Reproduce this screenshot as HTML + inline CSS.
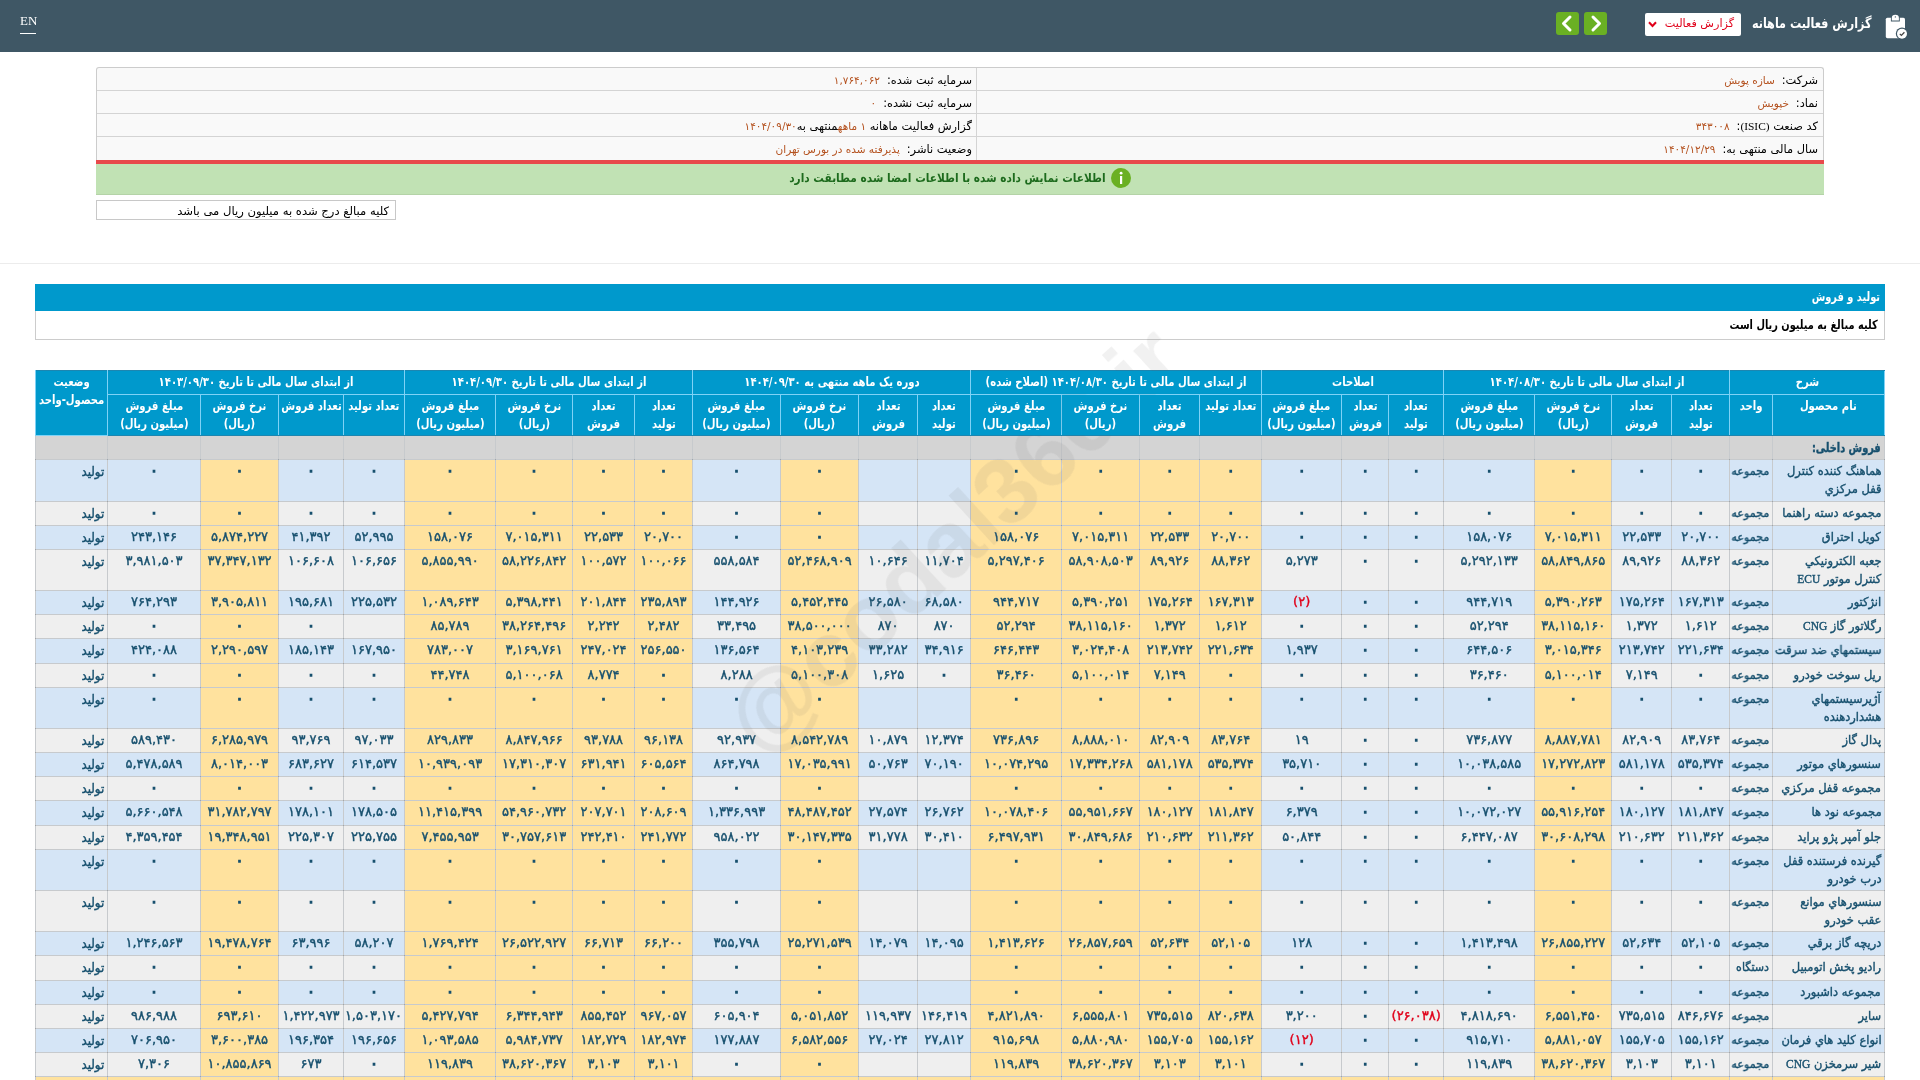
<!DOCTYPE html>
<html lang="fa">
<head>
<meta charset="utf-8">
<title>گزارش فعالیت ماهانه</title>
<style>
html,body{margin:0;padding:0;}
body{width:1920px;height:1080px;overflow:hidden;background:#fff;position:relative;
 font-family:"DejaVu Sans","Liberation Sans",sans-serif;font-size:11px;color:#000;}
.lt{font-family:"Liberation Serif","DejaVu Serif",serif;}
#root{position:absolute;left:0;top:0;width:1920px;height:1080px;overflow:hidden;will-change:transform;}
.abs{position:absolute;}
.sr{display:inline-block;transform:scaleX(.785);transform-origin:right center;}
.nr{display:inline-block;transform:scaleX(.94);transform-origin:right center;}
.sx{display:inline-block;transform:scaleX(.805);transform-origin:center center;margin:0 -20px;}
#topbar{left:0;top:0;width:1920px;height:52px;background:#3f5765;}
#en{left:20px;top:13px;color:#fff;font-family:"Liberation Serif",serif;font-size:13px;line-height:16px;}
#enline{left:20px;top:33px;width:16px;height:1px;background:#fff;}
#title{right:48px;top:12px;color:#fff;font-weight:bold;font-size:14px;line-height:22px;white-space:nowrap;direction:rtl;transform:scaleX(.8);transform-origin:right center;}
#sel{left:1645px;top:13px;width:96px;height:23px;background:#fff;border-radius:2px;direction:rtl;color:#e0001a;font-size:11.2px;line-height:22px;white-space:nowrap;}
#sel span{position:absolute;right:7px;top:0;}
.btn{top:12px;width:23px;height:23px;background:#6ab023;border-radius:3px;}
#info{left:96px;top:67px;width:1728px;height:94px;box-sizing:border-box;border:1px solid #ccc;border-bottom:none;border-radius:3px 3px 0 0;background:#f9f9f9;}
.irow{position:absolute;left:0;width:1726px;height:23px;border-bottom:1px solid #d4d4d4;box-sizing:border-box;}
.ic{position:absolute;top:0;height:22px;line-height:24px;direction:rtl;text-align:right;white-space:nowrap;font-size:11.4px;box-sizing:border-box;padding-right:5px;}
.ic.r{left:880px;width:846px;}
.ic.l{left:0;width:880px;border-right:0;}
.ic .v{color:#b4511e;font-size:10.5px;}
#vsep{left:879px;top:0;width:1px;height:93px;background:#d4d4d4;}
#red{left:96px;top:160px;width:1728px;height:4px;background:#e8494b;}
#green{left:96px;top:164px;width:1728px;height:31px;background:#c1e2b4;border-bottom:1px solid #b4d3a7;box-sizing:border-box;direction:rtl;text-align:center;color:#1d6b1d;font-size:12px;font-weight:bold;line-height:29px;white-space:nowrap;}
#green span{display:inline-block;transform:scaleX(.88);transform-origin:right center;margin-left:-43px;}
#note{left:96px;top:200px;width:300px;height:20px;box-sizing:border-box;border:1px solid #c8c8c8;direction:rtl;text-align:right;padding-right:6px;font-size:11.6px;line-height:21px;white-space:nowrap;}
#hr{left:0;top:263px;width:1920px;height:1px;background:#ececec;}
#bar{left:35px;top:284px;width:1850px;height:27px;background:#0099cc;color:#fff;font-weight:bold;font-size:12.5px;line-height:25px;direction:rtl;text-align:right;padding-right:5px;box-sizing:border-box;white-space:nowrap;}
#sub{left:35px;top:311px;width:1850px;height:29px;box-sizing:border-box;border:1px solid #ccc;border-top:none;font-weight:bold;font-size:12.5px;line-height:27px;direction:rtl;text-align:right;padding-right:6px;white-space:nowrap;}
#wm{left:553px;top:469px;width:800px;height:140px;line-height:140px;text-align:center;font-family:"Liberation Sans",sans-serif;font-weight:bold;font-size:93.5px;color:rgba(90,90,90,0.085);transform:rotate(-42.5deg);white-space:nowrap;pointer-events:none;z-index:5;}
table.grid{position:absolute;left:35px;top:370px;width:1849px;table-layout:fixed;border-collapse:collapse;direction:rtl;font-size:13px;line-height:17.5px;color:#17506e;-webkit-text-stroke:.4px #17506e;}
table.grid th,table.grid td{padding:2px 2px 0 2px;vertical-align:top;overflow:hidden;white-space:nowrap;text-align:center;font-weight:normal;}
table.grid th{background:#0099cc;color:#fff;font-weight:bold;font-size:12.5px;letter-spacing:0;border:1px solid #7fd2f6;line-height:17.5px;}
table.grid th{position:relative;z-index:6;}
tr.h1 th{border-top-color:#1d86b0;}
tr.h2 th,th.st{border-bottom-color:#1d86b0;}
tr.h1{height:24px;}
tr.h2{height:41px;}
table.grid td{border:1px solid rgba(80,90,100,.32);}
table.grid td.z{-webkit-text-stroke:1.3px #17506e;}
tr.sec td{background:#d4d4d4;font-weight:bold;font-size:12.5px;letter-spacing:0;}
tr.sec{height:24px;}
tr.b td{background:#d5e5f6;}
tr.g td{background:#efefef;}
tr.b td.y,tr.g td.y{background:#ffe29e;}
tr.sum td{background:#ffe29e;}
td.nm{text-align:right !important;padding-top:3px !important;padding-right:3px !important;font-size:12.2px;letter-spacing:0;}
td.un{text-align:right !important;padding-top:3px !important;padding-right:3px !important;font-size:11.8px;letter-spacing:0;}
td.sta{text-align:right !important;padding-top:3px !important;padding-right:3px !important;font-size:12.6px;letter-spacing:0;}
td.neg{color:#e0001a;-webkit-text-stroke-color:#e0001a;}
table.grid th{-webkit-text-stroke:0;}
</style>
</head>
<body>
<div id="root">
<div id="topbar" class="abs"></div>
<div id="en" class="abs">EN</div>
<div id="enline" class="abs"></div>
<svg class="abs" style="left:1876px;top:8px" width="40" height="36" viewBox="0 0 40 36">
 <rect x="9.8" y="9.7" width="19.2" height="20.5" rx="1.6" fill="#fff"/>
 <path d="M14.9 13.4 V10 a4.45 4 0 0 1 8.9 0 V13.4 z" fill="#3f5765"/>
 <path d="M15.8 12.6 V10 a3.55 3.2 0 0 1 7.1 0 V12.6 z" fill="#fff"/>
 <circle cx="19.35" cy="8.9" r="0.65" fill="#3f5765"/>
 <circle cx="26" cy="25.7" r="6.2" fill="#3f5765"/>
 <circle cx="26" cy="25.7" r="5" fill="#fff"/>
 <path d="M23.8 25.9 l1.6 1.5 l3 -3.1" fill="none" stroke="#444" stroke-width="1.3"/>
</svg>
<div id="title" class="abs">گزارش فعالیت ماهانه</div>
<div id="sel" class="abs"><span>گزارش فعالیت</span>
 <svg style="position:absolute;left:3px;top:8px" width="9" height="7" viewBox="0 0 9 7"><path d="M1 1.2 L4.5 5 L8 1.2" fill="none" stroke="#e0001a" stroke-width="2"/></svg>
</div>
<div class="abs btn" style="left:1584px"><svg width="23" height="23" viewBox="0 0 23 23"><path d="M9 5 L15.5 11.5 L9 18" fill="none" stroke="#fff" stroke-width="3" stroke-linecap="round" stroke-linejoin="round"/></svg></div>
<div class="abs btn" style="left:1556px"><svg width="23" height="23" viewBox="0 0 23 23"><path d="M14 5 L7.5 11.5 L14 18" fill="none" stroke="#fff" stroke-width="3" stroke-linecap="round" stroke-linejoin="round"/></svg></div>

<div id="info" class="abs">
 <div class="irow" style="top:0"><div class="ic r">شرکت: <span class="v">&nbsp;سازه پویش</span></div><div class="ic l">سرمایه ثبت شده: <span class="v">&nbsp;۱,۷۶۴,۰۶۲</span></div></div>
 <div class="irow" style="top:23px"><div class="ic r">نماد: <span class="v">&nbsp;خپویش</span></div><div class="ic l">سرمایه ثبت نشده: <span class="v">&nbsp;۰</span></div></div>
 <div class="irow" style="top:46px"><div class="ic r">کد صنعت <span class="lt">(ISIC)</span>: <span class="v">&nbsp;۳۴۳۰۰۸</span></div><div class="ic l">گزارش فعالیت ماهانه <span class="v">۱ ماهه</span>منتهی به<span class="v">۱۴۰۴/۰۹/۳۰</span></div></div>
 <div class="irow" style="top:69px;border-bottom:none"><div class="ic r">سال مالی منتهی به: <span class="v">&nbsp;۱۴۰۴/۱۲/۲۹</span></div><div class="ic l">وضعیت ناشر: <span class="v">&nbsp;پذیرفته شده در بورس تهران</span></div></div>
 <div id="vsep" class="abs"></div>
</div>
<div id="red" class="abs"></div>
<div id="green" class="abs"><svg style="vertical-align:middle;margin-left:5px;position:relative;top:-1px" width="20" height="20" viewBox="0 0 20 20"><circle cx="10" cy="10" r="10" fill="#6ab023"/><rect x="9" y="8" width="2.2" height="8" fill="#fff"/><circle cx="10.1" cy="5.2" r="1.4" fill="#fff"/></svg><span>اطلاعات نمایش داده شده با اطلاعات امضا شده مطابقت دارد</span></div>
<div id="note" class="abs">کلیه مبالغ درج شده به میلیون ریال می باشد</div>
<div id="hr" class="abs"></div>
<div id="bar" class="abs"><span class="sr">تولید و فروش</span></div>
<div id="sub" class="abs"><span class="sr">کلیه مبالغ به میلیون ریال است</span></div>
<table class="grid" dir="rtl"><colgroup>
<col style="width:112px">
<col style="width:43px">
<col style="width:58px">
<col style="width:60px">
<col style="width:77px">
<col style="width:91px">
<col style="width:55px">
<col style="width:47px">
<col style="width:80px">
<col style="width:62px">
<col style="width:60px">
<col style="width:78px">
<col style="width:91px">
<col style="width:53px">
<col style="width:59px">
<col style="width:78px">
<col style="width:88px">
<col style="width:58px">
<col style="width:62px">
<col style="width:77px">
<col style="width:91px">
<col style="width:61px">
<col style="width:65px">
<col style="width:78px">
<col style="width:93px">
<col style="width:72px">
</colgroup>
<tr class="h1"><th colspan="2"><span class="sx">شرح</span></th><th colspan="4"><span class="sx">از ابتدای سال مالی تا تاریخ ۱۴۰۴/۰۸/۳۰</span></th><th colspan="3"><span class="sx">اصلاحات</span></th><th colspan="4"><span class="sx">از ابتدای سال مالی تا تاریخ ۱۴۰۴/۰۸/۳۰ (اصلاح شده)</span></th><th colspan="4"><span class="sx">دوره یک ماهه منتهی به ۱۴۰۴/۰۹/۳۰</span></th><th colspan="4"><span class="sx">از ابتدای سال مالی تا تاریخ ۱۴۰۴/۰۹/۳۰</span></th><th colspan="4"><span class="sx">از ابتدای سال مالی تا تاریخ ۱۴۰۳/۰۹/۳۰</span></th><th rowspan="2" class="st"><span class="sx">وضعیت<br>محصول-واحد</span></th></tr>
<tr class="h2"><th><span class="sx">نام محصول</span></th><th><span class="sx">واحد</span></th><th><span class="sx">تعداد<br>تولید</span></th><th><span class="sx">تعداد<br>فروش</span></th><th><span class="sx">نرخ فروش<br>(ریال)</span></th><th><span class="sx">مبلغ فروش<br>(میلیون ریال)</span></th><th><span class="sx">تعداد<br>تولید</span></th><th><span class="sx">تعداد<br>فروش</span></th><th><span class="sx">مبلغ فروش<br>(میلیون ریال)</span></th><th><span class="sx">تعداد تولید</span></th><th><span class="sx">تعداد<br>فروش</span></th><th><span class="sx">نرخ فروش<br>(ریال)</span></th><th><span class="sx">مبلغ فروش<br>(میلیون ریال)</span></th><th><span class="sx">تعداد<br>تولید</span></th><th><span class="sx">تعداد<br>فروش</span></th><th><span class="sx">نرخ فروش<br>(ریال)</span></th><th><span class="sx">مبلغ فروش<br>(میلیون ریال)</span></th><th><span class="sx">تعداد<br>تولید</span></th><th><span class="sx">تعداد<br>فروش</span></th><th><span class="sx">نرخ فروش<br>(ریال)</span></th><th><span class="sx">مبلغ فروش<br>(میلیون ریال)</span></th><th><span class="sx">تعداد تولید</span></th><th><span class="sx">تعداد فروش</span></th><th><span class="sx">نرخ فروش<br>(ریال)</span></th><th><span class="sx">مبلغ فروش<br>(میلیون ریال)</span></th></tr>
<tr class="sec"><td class="nm"><span class="sr">فروش داخلی:</span></td><td></td><td></td><td></td><td></td><td></td><td></td><td></td><td></td><td></td><td></td><td></td><td></td><td></td><td></td><td></td><td></td><td></td><td></td><td></td><td></td><td></td><td></td><td></td><td></td><td></td></tr>
<tr class="b" style="height:42px"><td class="nm"><span class="nr">هماهنگ کننده کنترل</span><br><span class="nr">قفل مرکزي</span></td><td class="un"><span class="nr">مجموعه</span></td><td class=" z">۰</td><td class=" z">۰</td><td class="y z">۰</td><td class=" z">۰</td><td class=" z">۰</td><td class=" z">۰</td><td class=" z">۰</td><td class="y z">۰</td><td class="y z">۰</td><td class="y z">۰</td><td class="y z">۰</td><td class=""></td><td class=""></td><td class="y z">۰</td><td class=" z">۰</td><td class="y z">۰</td><td class="y z">۰</td><td class="y z">۰</td><td class="y z">۰</td><td class=" z">۰</td><td class=" z">۰</td><td class="y z">۰</td><td class=" z">۰</td><td class="sta"><span class="nr">تولید</span></td></tr>
<tr class="g" style="height:24px"><td class="nm"><span class="nr">مجموعه دسته راهنما</span></td><td class="un"><span class="nr">مجموعه</span></td><td class=" z">۰</td><td class=" z">۰</td><td class="y z">۰</td><td class=" z">۰</td><td class=" z">۰</td><td class=" z">۰</td><td class=" z">۰</td><td class="y z">۰</td><td class="y z">۰</td><td class="y z">۰</td><td class="y z">۰</td><td class=""></td><td class=""></td><td class="y z">۰</td><td class=" z">۰</td><td class="y z">۰</td><td class="y z">۰</td><td class="y z">۰</td><td class="y z">۰</td><td class=" z">۰</td><td class=" z">۰</td><td class="y z">۰</td><td class=" z">۰</td><td class="sta"><span class="nr">تولید</span></td></tr>
<tr class="b" style="height:24px"><td class="nm"><span class="nr">کویل احتراق</span></td><td class="un"><span class="nr">مجموعه</span></td><td class="">۲۰,۷۰۰</td><td class="">۲۲,۵۳۳</td><td class="y">۷,۰۱۵,۳۱۱</td><td class="">۱۵۸,۰۷۶</td><td class=" z">۰</td><td class=" z">۰</td><td class=" z">۰</td><td class="y">۲۰,۷۰۰</td><td class="y">۲۲,۵۳۳</td><td class="y">۷,۰۱۵,۳۱۱</td><td class="y">۱۵۸,۰۷۶</td><td class=""></td><td class=""></td><td class="y z">۰</td><td class=" z">۰</td><td class="y">۲۰,۷۰۰</td><td class="y">۲۲,۵۳۳</td><td class="y">۷,۰۱۵,۳۱۱</td><td class="y">۱۵۸,۰۷۶</td><td class="">۵۲,۹۹۵</td><td class="">۴۱,۳۹۲</td><td class="y">۵,۸۷۴,۲۲۷</td><td class="">۲۴۳,۱۴۶</td><td class="sta"><span class="nr">تولید</span></td></tr>
<tr class="g" style="height:41px"><td class="nm"><span class="nr">جعبه الکترونیکي</span><br><span class="nr">کنترل موتور <span class="lt">ECU</span></span></td><td class="un"><span class="nr">مجموعه</span></td><td class="">۸۸,۳۶۲</td><td class="">۸۹,۹۲۶</td><td class="y">۵۸,۸۴۹,۸۶۵</td><td class="">۵,۲۹۲,۱۳۳</td><td class=" z">۰</td><td class=" z">۰</td><td class="">۵,۲۷۳</td><td class="y">۸۸,۳۶۲</td><td class="y">۸۹,۹۲۶</td><td class="y">۵۸,۹۰۸,۵۰۳</td><td class="y">۵,۲۹۷,۴۰۶</td><td class="">۱۱,۷۰۴</td><td class="">۱۰,۶۴۶</td><td class="y">۵۲,۴۶۸,۹۰۹</td><td class="">۵۵۸,۵۸۴</td><td class="y">۱۰۰,۰۶۶</td><td class="y">۱۰۰,۵۷۲</td><td class="y">۵۸,۲۲۶,۸۴۲</td><td class="y">۵,۸۵۵,۹۹۰</td><td class="">۱۰۶,۶۵۶</td><td class="">۱۰۶,۶۰۸</td><td class="y">۳۷,۳۴۷,۱۳۲</td><td class="">۳,۹۸۱,۵۰۳</td><td class="sta"><span class="nr">تولید</span></td></tr>
<tr class="b" style="height:24px"><td class="nm"><span class="nr">انژکتور</span></td><td class="un"><span class="nr">مجموعه</span></td><td class="">۱۶۷,۳۱۳</td><td class="">۱۷۵,۲۶۴</td><td class="y">۵,۳۹۰,۲۶۳</td><td class="">۹۴۴,۷۱۹</td><td class=" z">۰</td><td class=" z">۰</td><td class=" neg">(۲)</td><td class="y">۱۶۷,۳۱۳</td><td class="y">۱۷۵,۲۶۴</td><td class="y">۵,۳۹۰,۲۵۱</td><td class="y">۹۴۴,۷۱۷</td><td class="">۶۸,۵۸۰</td><td class="">۲۶,۵۸۰</td><td class="y">۵,۴۵۲,۴۴۵</td><td class="">۱۴۴,۹۲۶</td><td class="y">۲۳۵,۸۹۳</td><td class="y">۲۰۱,۸۴۴</td><td class="y">۵,۳۹۸,۴۴۱</td><td class="y">۱,۰۸۹,۶۴۳</td><td class="">۲۲۵,۵۳۲</td><td class="">۱۹۵,۶۸۱</td><td class="y">۳,۹۰۵,۸۱۱</td><td class="">۷۶۴,۲۹۳</td><td class="sta"><span class="nr">تولید</span></td></tr>
<tr class="g" style="height:24px"><td class="nm"><span class="nr">رگلاتور گاز <span class="lt">CNG</span></span></td><td class="un"><span class="nr">مجموعه</span></td><td class="">۱,۶۱۲</td><td class="">۱,۳۷۲</td><td class="y">۳۸,۱۱۵,۱۶۰</td><td class="">۵۲,۲۹۴</td><td class=" z">۰</td><td class=" z">۰</td><td class=" z">۰</td><td class="y">۱,۶۱۲</td><td class="y">۱,۳۷۲</td><td class="y">۳۸,۱۱۵,۱۶۰</td><td class="y">۵۲,۲۹۴</td><td class="">۸۷۰</td><td class="">۸۷۰</td><td class="y">۳۸,۵۰۰,۰۰۰</td><td class="">۳۳,۴۹۵</td><td class="y">۲,۴۸۲</td><td class="y">۲,۲۴۲</td><td class="y">۳۸,۲۶۴,۴۹۶</td><td class="y">۸۵,۷۸۹</td><td class=""></td><td class=" z">۰</td><td class="y z">۰</td><td class=" z">۰</td><td class="sta"><span class="nr">تولید</span></td></tr>
<tr class="b" style="height:25px"><td class="nm"><span class="nr">سیستمهاي ضد سرقت</span></td><td class="un"><span class="nr">مجموعه</span></td><td class="">۲۲۱,۶۳۴</td><td class="">۲۱۳,۷۴۲</td><td class="y">۳,۰۱۵,۳۴۶</td><td class="">۶۴۴,۵۰۶</td><td class=" z">۰</td><td class=" z">۰</td><td class="">۱,۹۳۷</td><td class="y">۲۲۱,۶۳۴</td><td class="y">۲۱۳,۷۴۲</td><td class="y">۳,۰۲۴,۴۰۸</td><td class="y">۶۴۶,۴۴۳</td><td class="">۳۴,۹۱۶</td><td class="">۳۳,۲۸۲</td><td class="y">۴,۱۰۳,۲۳۹</td><td class="">۱۳۶,۵۶۴</td><td class="y">۲۵۶,۵۵۰</td><td class="y">۲۴۷,۰۲۴</td><td class="y">۳,۱۶۹,۷۶۱</td><td class="y">۷۸۳,۰۰۷</td><td class="">۱۶۷,۹۵۰</td><td class="">۱۸۵,۱۴۳</td><td class="y">۲,۲۹۰,۵۹۷</td><td class="">۴۲۴,۰۸۸</td><td class="sta"><span class="nr">تولید</span></td></tr>
<tr class="g" style="height:24px"><td class="nm"><span class="nr">ریل سوخت خودرو</span></td><td class="un"><span class="nr">مجموعه</span></td><td class=" z">۰</td><td class="">۷,۱۴۹</td><td class="y">۵,۱۰۰,۰۱۴</td><td class="">۳۶,۴۶۰</td><td class=" z">۰</td><td class=" z">۰</td><td class=" z">۰</td><td class="y z">۰</td><td class="y">۷,۱۴۹</td><td class="y">۵,۱۰۰,۰۱۴</td><td class="y">۳۶,۴۶۰</td><td class=" z">۰</td><td class="">۱,۶۲۵</td><td class="y">۵,۱۰۰,۳۰۸</td><td class="">۸,۲۸۸</td><td class="y z">۰</td><td class="y">۸,۷۷۴</td><td class="y">۵,۱۰۰,۰۶۸</td><td class="y">۴۴,۷۴۸</td><td class=" z">۰</td><td class=" z">۰</td><td class="y z">۰</td><td class=" z">۰</td><td class="sta"><span class="nr">تولید</span></td></tr>
<tr class="b" style="height:41px"><td class="nm"><span class="nr">آژیرسیستمهاي</span><br><span class="nr">هشداردهنده</span></td><td class="un"><span class="nr">مجموعه</span></td><td class=" z">۰</td><td class=" z">۰</td><td class="y z">۰</td><td class=" z">۰</td><td class=" z">۰</td><td class=" z">۰</td><td class=" z">۰</td><td class="y z">۰</td><td class="y z">۰</td><td class="y z">۰</td><td class="y z">۰</td><td class=""></td><td class=""></td><td class="y z">۰</td><td class=" z">۰</td><td class="y z">۰</td><td class="y z">۰</td><td class="y z">۰</td><td class="y z">۰</td><td class=" z">۰</td><td class=" z">۰</td><td class="y z">۰</td><td class=" z">۰</td><td class="sta"><span class="nr">تولید</span></td></tr>
<tr class="g" style="height:24px"><td class="nm"><span class="nr">پدال گاز</span></td><td class="un"><span class="nr">مجموعه</span></td><td class="">۸۳,۷۶۴</td><td class="">۸۲,۹۰۹</td><td class="y">۸,۸۸۷,۷۸۱</td><td class="">۷۳۶,۸۷۷</td><td class=" z">۰</td><td class=" z">۰</td><td class="">۱۹</td><td class="y">۸۳,۷۶۴</td><td class="y">۸۲,۹۰۹</td><td class="y">۸,۸۸۸,۰۱۰</td><td class="y">۷۳۶,۸۹۶</td><td class="">۱۲,۳۷۴</td><td class="">۱۰,۸۷۹</td><td class="y">۸,۵۴۲,۷۸۹</td><td class="">۹۲,۹۳۷</td><td class="y">۹۶,۱۳۸</td><td class="y">۹۳,۷۸۸</td><td class="y">۸,۸۴۷,۹۶۶</td><td class="y">۸۲۹,۸۳۳</td><td class="">۹۷,۰۳۳</td><td class="">۹۳,۷۶۹</td><td class="y">۶,۲۸۵,۹۷۹</td><td class="">۵۸۹,۴۳۰</td><td class="sta"><span class="nr">تولید</span></td></tr>
<tr class="b" style="height:24px"><td class="nm"><span class="nr">سنسورهاي موتور</span></td><td class="un"><span class="nr">مجموعه</span></td><td class="">۵۳۵,۳۷۴</td><td class="">۵۸۱,۱۷۸</td><td class="y">۱۷,۲۷۲,۸۲۳</td><td class="">۱۰,۰۳۸,۵۸۵</td><td class=" z">۰</td><td class=" z">۰</td><td class="">۳۵,۷۱۰</td><td class="y">۵۳۵,۳۷۴</td><td class="y">۵۸۱,۱۷۸</td><td class="y">۱۷,۳۳۴,۲۶۸</td><td class="y">۱۰,۰۷۴,۲۹۵</td><td class="">۷۰,۱۹۰</td><td class="">۵۰,۷۶۳</td><td class="y">۱۷,۰۳۵,۹۹۱</td><td class="">۸۶۴,۷۹۸</td><td class="y">۶۰۵,۵۶۴</td><td class="y">۶۳۱,۹۴۱</td><td class="y">۱۷,۳۱۰,۳۰۷</td><td class="y">۱۰,۹۳۹,۰۹۳</td><td class="">۶۱۴,۵۳۷</td><td class="">۶۸۳,۶۲۷</td><td class="y">۸,۰۱۴,۰۰۳</td><td class="">۵,۴۷۸,۵۸۹</td><td class="sta"><span class="nr">تولید</span></td></tr>
<tr class="g" style="height:24px"><td class="nm"><span class="nr">مجموعه قفل مرکزي</span></td><td class="un"><span class="nr">مجموعه</span></td><td class=" z">۰</td><td class=" z">۰</td><td class="y z">۰</td><td class=" z">۰</td><td class=" z">۰</td><td class=" z">۰</td><td class=" z">۰</td><td class="y z">۰</td><td class="y z">۰</td><td class="y z">۰</td><td class="y z">۰</td><td class=""></td><td class=""></td><td class="y z">۰</td><td class=" z">۰</td><td class="y z">۰</td><td class="y z">۰</td><td class="y z">۰</td><td class="y z">۰</td><td class=" z">۰</td><td class=" z">۰</td><td class="y z">۰</td><td class=" z">۰</td><td class="sta"><span class="nr">تولید</span></td></tr>
<tr class="b" style="height:25px"><td class="nm"><span class="nr">مجموعه نود ها</span></td><td class="un"><span class="nr">مجموعه</span></td><td class="">۱۸۱,۸۴۷</td><td class="">۱۸۰,۱۲۷</td><td class="y">۵۵,۹۱۶,۲۵۴</td><td class="">۱۰,۰۷۲,۰۲۷</td><td class=" z">۰</td><td class=" z">۰</td><td class="">۶,۳۷۹</td><td class="y">۱۸۱,۸۴۷</td><td class="y">۱۸۰,۱۲۷</td><td class="y">۵۵,۹۵۱,۶۶۷</td><td class="y">۱۰,۰۷۸,۴۰۶</td><td class="">۲۶,۷۶۲</td><td class="">۲۷,۵۷۴</td><td class="y">۴۸,۴۸۷,۴۵۲</td><td class="">۱,۳۳۶,۹۹۳</td><td class="y">۲۰۸,۶۰۹</td><td class="y">۲۰۷,۷۰۱</td><td class="y">۵۴,۹۶۰,۷۳۲</td><td class="y">۱۱,۴۱۵,۳۹۹</td><td class="">۱۷۸,۵۰۵</td><td class="">۱۷۸,۱۰۱</td><td class="y">۳۱,۷۸۲,۷۹۷</td><td class="">۵,۶۶۰,۵۴۸</td><td class="sta"><span class="nr">تولید</span></td></tr>
<tr class="g" style="height:24px"><td class="nm"><span class="nr">جلو آمپر پژو پراید</span></td><td class="un"><span class="nr">مجموعه</span></td><td class="">۲۱۱,۳۶۲</td><td class="">۲۱۰,۶۳۲</td><td class="y">۳۰,۶۰۸,۲۹۸</td><td class="">۶,۴۴۷,۰۸۷</td><td class=" z">۰</td><td class=" z">۰</td><td class="">۵۰,۸۴۴</td><td class="y">۲۱۱,۳۶۲</td><td class="y">۲۱۰,۶۳۲</td><td class="y">۳۰,۸۴۹,۶۸۶</td><td class="y">۶,۴۹۷,۹۳۱</td><td class="">۳۰,۴۱۰</td><td class="">۳۱,۷۷۸</td><td class="y">۳۰,۱۴۷,۳۳۵</td><td class="">۹۵۸,۰۲۲</td><td class="y">۲۴۱,۷۷۲</td><td class="y">۲۴۲,۴۱۰</td><td class="y">۳۰,۷۵۷,۶۱۳</td><td class="y">۷,۴۵۵,۹۵۳</td><td class="">۲۲۵,۷۵۵</td><td class="">۲۲۵,۳۰۷</td><td class="y">۱۹,۳۴۸,۹۵۱</td><td class="">۴,۳۵۹,۴۵۴</td><td class="sta"><span class="nr">تولید</span></td></tr>
<tr class="b" style="height:41px"><td class="nm"><span class="nr">گیرنده فرستنده قفل</span><br><span class="nr">درب خودرو</span></td><td class="un"><span class="nr">مجموعه</span></td><td class=" z">۰</td><td class=" z">۰</td><td class="y z">۰</td><td class=" z">۰</td><td class=" z">۰</td><td class=" z">۰</td><td class=" z">۰</td><td class="y z">۰</td><td class="y z">۰</td><td class="y z">۰</td><td class="y z">۰</td><td class=""></td><td class=""></td><td class="y z">۰</td><td class=" z">۰</td><td class="y z">۰</td><td class="y z">۰</td><td class="y z">۰</td><td class="y z">۰</td><td class=" z">۰</td><td class=" z">۰</td><td class="y z">۰</td><td class=" z">۰</td><td class="sta"><span class="nr">تولید</span></td></tr>
<tr class="g" style="height:41px"><td class="nm"><span class="nr">سنسورهاي موانع</span><br><span class="nr">عقب خودرو</span></td><td class="un"><span class="nr">مجموعه</span></td><td class=" z">۰</td><td class=" z">۰</td><td class="y z">۰</td><td class=" z">۰</td><td class=" z">۰</td><td class=" z">۰</td><td class=" z">۰</td><td class="y z">۰</td><td class="y z">۰</td><td class="y z">۰</td><td class="y z">۰</td><td class=""></td><td class=""></td><td class="y z">۰</td><td class=" z">۰</td><td class="y z">۰</td><td class="y z">۰</td><td class="y z">۰</td><td class="y z">۰</td><td class=" z">۰</td><td class=" z">۰</td><td class="y z">۰</td><td class=" z">۰</td><td class="sta"><span class="nr">تولید</span></td></tr>
<tr class="b" style="height:24px"><td class="nm"><span class="nr">دریچه گاز برقي</span></td><td class="un"><span class="nr">مجموعه</span></td><td class="">۵۲,۱۰۵</td><td class="">۵۲,۶۳۴</td><td class="y">۲۶,۸۵۵,۲۲۷</td><td class="">۱,۴۱۳,۴۹۸</td><td class=" z">۰</td><td class=" z">۰</td><td class="">۱۲۸</td><td class="y">۵۲,۱۰۵</td><td class="y">۵۲,۶۳۴</td><td class="y">۲۶,۸۵۷,۶۵۹</td><td class="y">۱,۴۱۳,۶۲۶</td><td class="">۱۴,۰۹۵</td><td class="">۱۴,۰۷۹</td><td class="y">۲۵,۲۷۱,۵۳۹</td><td class="">۳۵۵,۷۹۸</td><td class="y">۶۶,۲۰۰</td><td class="y">۶۶,۷۱۳</td><td class="y">۲۶,۵۲۲,۹۲۷</td><td class="y">۱,۷۶۹,۴۲۴</td><td class="">۵۸,۲۰۷</td><td class="">۶۳,۹۹۶</td><td class="y">۱۹,۴۷۸,۷۶۴</td><td class="">۱,۲۴۶,۵۶۳</td><td class="sta"><span class="nr">تولید</span></td></tr>
<tr class="g" style="height:25px"><td class="nm"><span class="nr">رادیو پخش اتومبیل</span></td><td class="un"><span class="nr">دستگاه</span></td><td class=" z">۰</td><td class=" z">۰</td><td class="y z">۰</td><td class=" z">۰</td><td class=" z">۰</td><td class=" z">۰</td><td class=" z">۰</td><td class="y z">۰</td><td class="y z">۰</td><td class="y z">۰</td><td class="y z">۰</td><td class=""></td><td class=""></td><td class="y z">۰</td><td class=" z">۰</td><td class="y z">۰</td><td class="y z">۰</td><td class="y z">۰</td><td class="y z">۰</td><td class=" z">۰</td><td class=" z">۰</td><td class="y z">۰</td><td class=" z">۰</td><td class="sta"><span class="nr">تولید</span></td></tr>
<tr class="b" style="height:24px"><td class="nm"><span class="nr">مجموعه داشبورد</span></td><td class="un"><span class="nr">مجموعه</span></td><td class=" z">۰</td><td class=" z">۰</td><td class="y z">۰</td><td class=" z">۰</td><td class=" z">۰</td><td class=" z">۰</td><td class=" z">۰</td><td class="y z">۰</td><td class="y z">۰</td><td class="y z">۰</td><td class="y z">۰</td><td class=""></td><td class=""></td><td class="y z">۰</td><td class=" z">۰</td><td class="y z">۰</td><td class="y z">۰</td><td class="y z">۰</td><td class="y z">۰</td><td class=" z">۰</td><td class=" z">۰</td><td class="y z">۰</td><td class=" z">۰</td><td class="sta"><span class="nr">تولید</span></td></tr>
<tr class="g" style="height:24px"><td class="nm"><span class="nr">سایر</span></td><td class="un"><span class="nr">مجموعه</span></td><td class="">۸۴۶,۶۷۶</td><td class="">۷۳۵,۵۱۵</td><td class="y">۶,۵۵۱,۴۵۰</td><td class="">۴,۸۱۸,۶۹۰</td><td class=" neg">(۲۶,۰۳۸)</td><td class=" z">۰</td><td class="">۳,۲۰۰</td><td class="y">۸۲۰,۶۳۸</td><td class="y">۷۳۵,۵۱۵</td><td class="y">۶,۵۵۵,۸۰۱</td><td class="y">۴,۸۲۱,۸۹۰</td><td class="">۱۴۶,۴۱۹</td><td class="">۱۱۹,۹۳۷</td><td class="y">۵,۰۵۱,۸۵۲</td><td class="">۶۰۵,۹۰۴</td><td class="y">۹۶۷,۰۵۷</td><td class="y">۸۵۵,۴۵۲</td><td class="y">۶,۳۴۴,۹۴۳</td><td class="y">۵,۴۲۷,۷۹۴</td><td class="">۱,۵۰۳,۱۷۰</td><td class="">۱,۴۲۲,۹۷۳</td><td class="y">۶۹۳,۶۱۰</td><td class="">۹۸۶,۹۸۸</td><td class="sta"><span class="nr">تولید</span></td></tr>
<tr class="b" style="height:24px"><td class="nm"><span class="nr">انواع کلید هاي فرمان</span></td><td class="un"><span class="nr">مجموعه</span></td><td class="">۱۵۵,۱۶۲</td><td class="">۱۵۵,۷۰۵</td><td class="y">۵,۸۸۱,۰۵۷</td><td class="">۹۱۵,۷۱۰</td><td class=" z">۰</td><td class=" z">۰</td><td class=" neg">(۱۲)</td><td class="y">۱۵۵,۱۶۲</td><td class="y">۱۵۵,۷۰۵</td><td class="y">۵,۸۸۰,۹۸۰</td><td class="y">۹۱۵,۶۹۸</td><td class="">۲۷,۸۱۲</td><td class="">۲۷,۰۲۴</td><td class="y">۶,۵۸۲,۵۵۶</td><td class="">۱۷۷,۸۸۷</td><td class="y">۱۸۲,۹۷۴</td><td class="y">۱۸۲,۷۲۹</td><td class="y">۵,۹۸۴,۷۳۷</td><td class="y">۱,۰۹۳,۵۸۵</td><td class="">۱۹۶,۶۵۶</td><td class="">۱۹۶,۳۵۴</td><td class="y">۳,۶۰۰,۳۸۵</td><td class="">۷۰۶,۹۵۰</td><td class="sta"><span class="nr">تولید</span></td></tr>
<tr class="g" style="height:24px"><td class="nm"><span class="nr">شیر سرمخزن <span class="lt">CNG</span></span></td><td class="un"><span class="nr">مجموعه</span></td><td class="">۳,۱۰۱</td><td class="">۳,۱۰۳</td><td class="y">۳۸,۶۲۰,۳۶۷</td><td class="">۱۱۹,۸۳۹</td><td class=" z">۰</td><td class=" z">۰</td><td class=" z">۰</td><td class="y">۳,۱۰۱</td><td class="y">۳,۱۰۳</td><td class="y">۳۸,۶۲۰,۳۶۷</td><td class="y">۱۱۹,۸۳۹</td><td class=""></td><td class=""></td><td class="y z">۰</td><td class=" z">۰</td><td class="y">۳,۱۰۱</td><td class="y">۳,۱۰۳</td><td class="y">۳۸,۶۲۰,۳۶۷</td><td class="y">۱۱۹,۸۳۹</td><td class=" z">۰</td><td class="">۶۷۳</td><td class="y">۱۰,۸۵۵,۸۶۹</td><td class="">۷,۳۰۶</td><td class="sta"><span class="nr">تولید</span></td></tr>
<tr class="sum" style="height:24px"><td class="nm">جمع فروش داخلی</td><td></td><td></td><td></td><td></td><td></td><td></td><td></td><td></td><td></td><td></td><td></td><td></td><td></td><td></td><td></td><td></td><td></td><td></td><td></td><td></td><td></td><td></td><td></td><td></td><td></td></tr>
</table>
<div id="wm" class="abs">@codal360.ir</div>
</div>
</body>
</html>
